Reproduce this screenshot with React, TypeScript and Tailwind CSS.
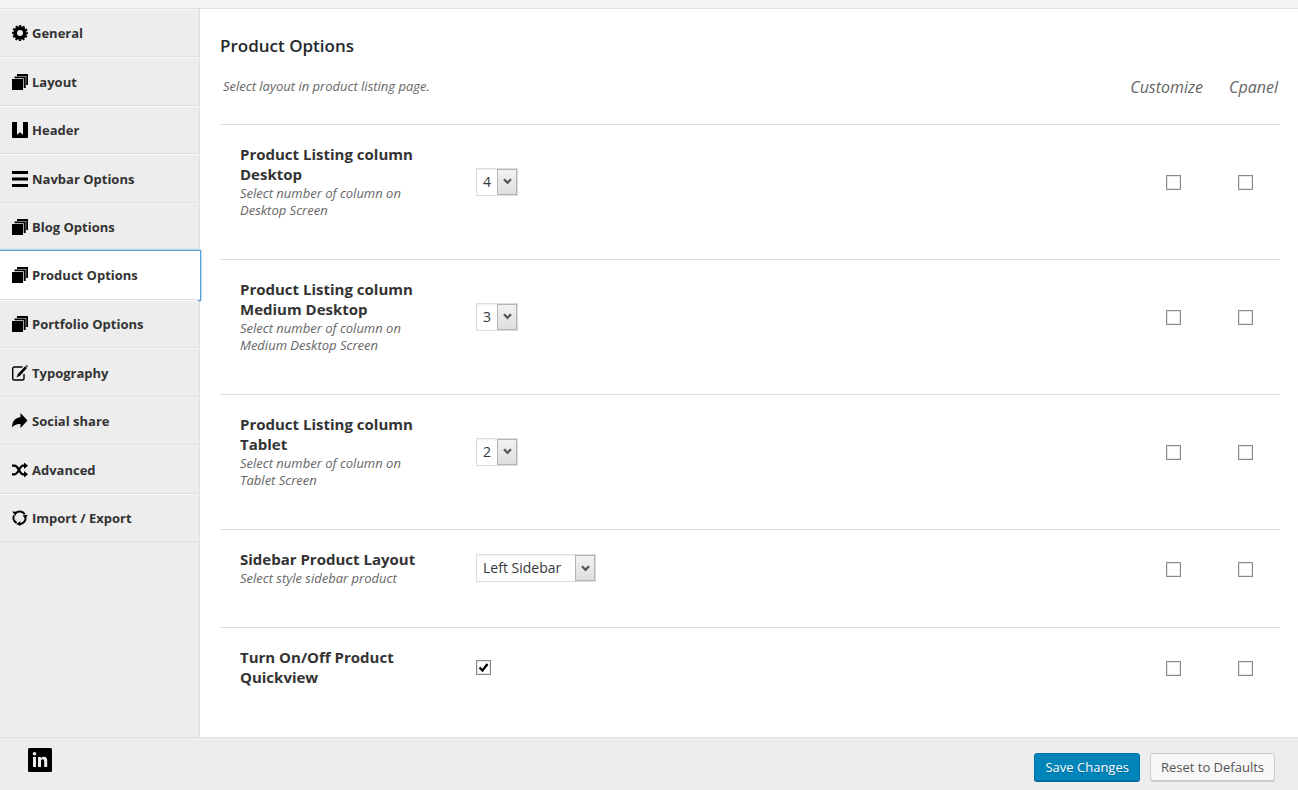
import React, { useState } from 'react';
import clsx from 'clsx';

type IconProps = { className?: string };

const CogIcon = ({ className }: IconProps) => (
  <svg viewBox="0 0 16 16" className={className} fill="currentColor" aria-hidden="true">
    <circle cx="8" cy="8" r="4.9" fill="none" stroke="currentColor" strokeWidth="3.8" />
    <circle cx="8" cy="8" r="7.2" fill="none" stroke="currentColor" strokeWidth="1.6" strokeDasharray="2.2 1.57" strokeDashoffset="1.1" />
  </svg>
);

const StackIcon = ({ className }: IconProps) => (
  <svg viewBox="0 0 16 16" className={className} fill="currentColor" aria-hidden="true">
    <path d="M0 5h11v11H0z" />
    <path d="M2.5 2.5h11.200v11.500h-2V4.300H2.500z" />
    <path d="M5 0h11v11h-1.800V2H5z" />
  </svg>
);

const BookmarkIcon = ({ className }: IconProps) => (
  <svg viewBox="0 0 16 16" className={className} fill="currentColor" aria-hidden="true">
    <path d="M1 0h4v12.800l3-2.600 3 2.600V0h4a1 1 0 0 1 1 1v14a1 1 0 0 1-1 1H1a1 1 0 0 1-1-1V1a1 1 0 0 1 1-1z" />
  </svg>
);

const LinesIcon = ({ className }: IconProps) => (
  <svg viewBox="0 0 16 16" className={className} fill="currentColor" aria-hidden="true">
    <path d="M0 0h16v3H0zM0 6.500h16v3H0zM0 13h16v3H0z" />
  </svg>
);

const EditIcon = ({ className }: IconProps) => (
  <svg viewBox="0 0 16 16" className={className} fill="currentColor" aria-hidden="true">
    <path d="M10.500 2H2.200A1.500 1.500 0 0 0 .7 3.500v10A1.500 1.500 0 0 0 2.200 15h8.300a1.500 1.500 0 0 0 1.500-1.500V9" fill="none" stroke="currentColor" strokeWidth="1.400" />
    <path d="M13.200 1.300l1.800 1.600-7.300 8L4.500 12.500l1.400-3.400zM13.800.7l.8-.7L16 1.400l-.6.9z" />
  </svg>
);

const ShareIcon = ({ className }: IconProps) => (
  <svg viewBox="0 0 16 16" className={className} fill="currentColor" aria-hidden="true">
    <path d="M8.500 0L15.500 7.500 8.500 15v-4C4.500 10.800 2 12 .3 14.500-.2 9 2.500 4.800 8.500 4.200z" />
  </svg>
);

const ShuffleIcon = ({ className }: IconProps) => (
  <svg viewBox="0 0 16 16" className={className} fill="currentColor" aria-hidden="true">
    <path d="M0 3.700h2.500C6.500 3.700 7.500 12.300 11 12.300h2M0 12.300h2.500C6.500 12.300 7.500 3.700 11 3.700h2" fill="none" stroke="currentColor" strokeWidth="2.300" />
    <path d="M12 .5l4 3.200-4 3.200zM12 9.100l4 3.200-4 3.200z" />
  </svg>
);

const RefreshIcon = ({ className }: IconProps) => (
  <svg viewBox="0 0 16 16" className={className} fill="currentColor" aria-hidden="true">
    <path d="M3.600 3.200A6 6 0 0 1 12.800 4.300M13.600 7.500A6 6 0 0 1 7 13.900M4.600 13A6 6 0 0 1 2 5.300" fill="none" stroke="currentColor" strokeWidth="2" />
    <path d="M.3 1.600l4.700.2-1.600 4.100zM10.500 5.400l5.300-.6-2.500 4zM8.300 11.300v4.700L4.300 14z" />
  </svg>
);

const LinkedinIcon = ({ className }: IconProps) => (
  <svg viewBox="0 0 24 24" className={className} aria-hidden="true">
    <rect width="24" height="24" rx="1.500" fill="#000" />
    <g fill="#ededed">
      <circle cx="6.500" cy="5.800" r="1.800" />
      <path d="M5 9h3v10H5zM10 9h2.900v1.400c.8-1.100 1.700-1.600 3-1.600 2.200 0 3.300 1.400 3.300 3.900V19h-3v-5.700c0-1.400-.4-2.100-1.400-2.100-1.200 0-1.800.8-1.800 2.300V19h-3z" />
    </g>
  </svg>
);

const sections = [
  { name: 'General', icon: CogIcon },
  { name: 'Layout', icon: StackIcon },
  { name: 'Header', icon: BookmarkIcon },
  { name: 'Navbar Options', icon: LinesIcon },
  { name: 'Blog Options', icon: StackIcon },
  { name: 'Product Options', icon: StackIcon },
  { name: 'Portfolio Options', icon: StackIcon },
  { name: 'Typography', icon: EditIcon },
  { name: 'Social share', icon: ShareIcon },
  { name: 'Advanced', icon: ShuffleIcon },
  { name: 'Import / Export', icon: RefreshIcon },
];

type Field = {
  id: string;
  title: string;
  description?: string;
  options?: string[];
  value?: string;
};

const columns = ['1', '2', '3', '4', '6'];

const fields: Field[] = [
  { id: 'cols-desktop', title: 'Product Listing column Desktop', description: 'Select number of column on Desktop Screen', options: columns, value: '4' },
  { id: 'cols-medium', title: 'Product Listing column Medium Desktop', description: 'Select number of column on Medium Desktop Screen', options: columns, value: '3' },
  { id: 'cols-tablet', title: 'Product Listing column Tablet', description: 'Select number of column on Tablet Screen', options: columns, value: '2' },
  { id: 'sidebar', title: 'Sidebar Product Layout', description: 'Select style sidebar product', options: ['Left Sidebar', 'Right Sidebar', 'No Sidebar'], value: 'Left Sidebar' },
  { id: 'quickview', title: 'Turn On/Off Product Quickview' },
];

type CheckboxProps = React.InputHTMLAttributes<HTMLInputElement>;

const Checkbox = (props: CheckboxProps) => (
  <span className="relative block size-[15px]">
    <input
      type="checkbox"
      className="peer block size-[15px] appearance-none border border-[#8a8a8a] bg-white shadow-[inset_0_0_0_1px_#e6e6e6]"
      {...props}
    />
    <svg viewBox="0 0 15 15" className="pointer-events-none absolute inset-0 hidden peer-checked:block" aria-hidden="true">
      <path d="M3.500 7.500l3 3 5-6.500" fill="none" stroke="#000" strokeWidth="2.400" />
    </svg>
  </span>
);

const Select = ({ id, options, value }: { id: string; options: string[]; value?: string }) => (
  <span className="relative block w-fit">
    <select
      id={id}
      defaultValue={value}
      className={clsx(
        'block h-7 appearance-none border border-[#ddd] bg-white pl-1.5 text-sm text-[#32373c] shadow-[inset_0_1px_2px_rgba(0,0,0,0.07)]',
        id === 'sidebar' ? 'w-[120px]' : 'w-[42px]'
      )}
    >
      {options.map((option) => (
        <option key={option}>{option}</option>
      ))}
    </select>
    <span className="pointer-events-none absolute inset-y-px right-px flex w-5 items-center justify-center border border-[#b5b5b5] bg-linear-to-b from-[#f2f2f2] to-[#dedede]">
      <svg viewBox="0 0 9 7" className="h-[7px] w-[9px]" aria-hidden="true">
        <path d="M1 1.200l3.500 3.600L8 1.200" fill="none" stroke="#555" strokeWidth="2.200" />
      </svg>
    </span>
  </span>
);

const FieldRow = ({ field }: { field: Field }) => (
  <div className="flex items-center border-t border-[#ddd] pt-[19px] pr-[27px] pb-10 pl-5">
    <div className="mr-9 w-[200px] shrink-0">
      <label htmlFor={field.id} className="block text-[15px] leading-5 font-bold text-[#333]">
        {field.title}
      </label>
      {field.description && (
        <p className="w-[180px] pt-px text-[13px] leading-[17px] text-[#666] italic">{field.description}</p>
      )}
    </div>
    <div className="flex-1">
      {field.options ? (
        <Select id={field.id} options={field.options} value={field.value} />
      ) : (
        <Checkbox id={field.id} defaultChecked />
      )}
    </div>
    <div className="flex gap-[57px] pt-0.5">
      <Checkbox aria-label={`Customize: ${field.title}`} />
      <Checkbox aria-label={`Cpanel: ${field.title}`} />
    </div>
  </div>
);

export default function App() {
  const [active, setActive] = useState('Product Options');

  return (
    <div className="flex min-h-screen flex-col bg-[#ededed] font-['Open_Sans',sans-serif]">
      <div className="h-[9px] border-b border-[#dfdfdf] bg-[#f4f4f4]" />

      <div className="flex flex-1">
        {/* Sidebar */}
        <nav className="relative w-[200px] shrink-0 border-r border-[#dfdfdf]">
          <ul>
            {sections.map(({ name, icon: Icon }) => (
              <li key={name} className="odd:h-12 even:h-[49px]">
                <button
                  type="button"
                  onClick={() => setActive(name)}
                  className={clsx(
                    'relative flex h-full items-center gap-1 border-b border-b-[#dfdfdf] pl-3 text-left text-[13px] font-bold text-[#333]',
                    name === active
                      ? 'w-[200px] bg-white shadow-[0_0_0_1px_#5b9dd9,0_0_2px_1px_rgba(30,140,190,0.8)]'
                      : 'w-[198px] border-t border-t-[#f8f8f8] bg-[#ededed]'
                  )}
                >
                  <Icon className="size-4 text-black" />
                  <span className="pt-0.5">{name}</span>
                </button>
              </li>
            ))}
          </ul>
        </nav>

        {/* Main panel */}
        <main className="flex-1 bg-white pt-[25px] pr-[18px] pl-5">
          <h3 className="text-[17px] leading-6 font-semibold text-[#23282d]">Product Options</h3>
          <div className="mt-4 flex h-[50px] items-start justify-between text-[#666] italic">
            <p className="pl-[3px] text-[13px] leading-6">Select layout in product listing page.</p>
            <div className="flex gap-[26px] pr-0.5 text-base leading-[26px]">
              <span>Customize</span>
              <span>Cpanel</span>
            </div>
          </div>
          {fields.map((field) => (
            <FieldRow key={field.id} field={field} />
          ))}
        </main>
      </div>

      {/* Footer */}
      <footer className="flex h-[53px] items-start justify-between border-t border-[#dfdfdf] pr-[23px] pl-7">
        <a href="#linkedin" aria-label="LinkedIn" className="mt-2.5">
          <LinkedinIcon className="size-6" />
        </a>
        <div className="mt-[15px] flex gap-2.5 text-[13px]">
          <button type="button" className="h-7 rounded-[3px] border border-[#0073aa] bg-[#0085ba] px-2.5 pt-0.5 text-white shadow-[0_1px_0_#006799] [text-shadow:0_1px_1px_#006799]">
            Save Changes
          </button>
          <button type="button" className="h-7 rounded-[3px] border border-[#ccc] bg-[#f7f7f7] px-2.5 pt-0.5 text-[#555] shadow-[0_1px_0_#ccc]">
            Reset to Defaults
          </button>
        </div>
      </footer>
    </div>
  );
}
